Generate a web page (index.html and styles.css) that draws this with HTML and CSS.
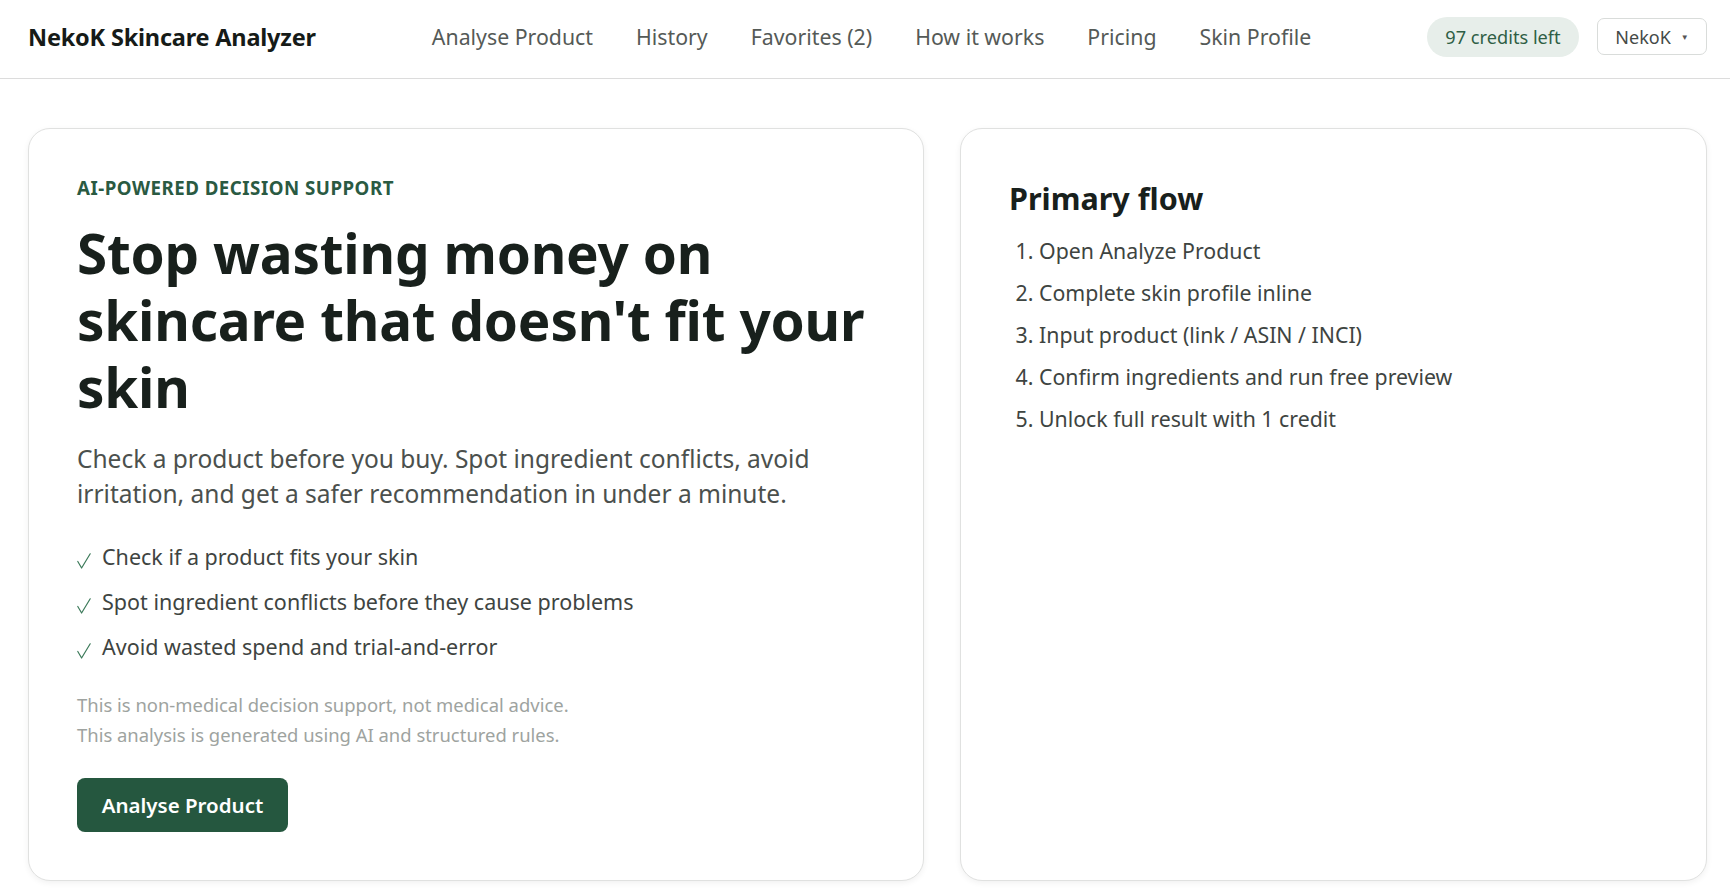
FILE: index.html
```html
<!DOCTYPE html>
<html lang="en">
<head>
<meta charset="utf-8">
<title>NekoK Skincare Analyzer</title>
<link rel="stylesheet" href="styles.css">
</head>
<body>
<header class="topbar">
  <div class="brand">NekoK Skincare Analyzer</div>
  <nav class="nav">
    <a href="#">Analyse Product</a>
    <a href="#">History</a>
    <a href="#">Favorites (2)</a>
    <a href="#">How it works</a>
    <a href="#">Pricing</a>
    <a href="#">Skin Profile</a>
  </nav>
  <div class="account">
    <span class="credits">97 credits left</span>
    <button class="user">NekoK <span class="caret">▼</span></button>
  </div>
</header>
<main class="main">
  <section class="card hero">
    <div class="eyebrow">AI-POWERED DECISION SUPPORT</div>
    <h1 class="headline">Stop wasting money on skincare that doesn't fit your skin</h1>
    <p class="lead">Check a product before you buy. Spot ingredient conflicts, avoid irritation, and get a safer recommendation in under a minute.</p>
    <ul class="checks">
      <li><svg class="tick" viewBox="0 0 14 16" width="14" height="16"><polyline points="0.8,8.5 4.6,15 13.2,0.8" fill="none" stroke="#3c7a5a" stroke-width="1.2" stroke-linejoin="round" stroke-linecap="round"/></svg>Check if a product fits your skin</li>
      <li><svg class="tick" viewBox="0 0 14 16" width="14" height="16"><polyline points="0.8,8.5 4.6,15 13.2,0.8" fill="none" stroke="#3c7a5a" stroke-width="1.2" stroke-linejoin="round" stroke-linecap="round"/></svg>Spot ingredient conflicts before they cause problems</li>
      <li><svg class="tick" viewBox="0 0 14 16" width="14" height="16"><polyline points="0.8,8.5 4.6,15 13.2,0.8" fill="none" stroke="#3c7a5a" stroke-width="1.2" stroke-linejoin="round" stroke-linecap="round"/></svg>Avoid wasted spend and trial-and-error</li>
    </ul>
    <div class="disclaimer">
      <p>This is non-medical decision support, not medical advice.</p>
      <p>This analysis is generated using AI and structured rules.</p>
    </div>
    <button class="cta">Analyse Product</button>
  </section>
  <section class="card flow">
    <h2 class="flow-title">Primary flow</h2>
    <ol class="steps">
      <li>Open Analyze Product</li>
      <li>Complete skin profile inline</li>
      <li>Input product (link / ASIN / INCI)</li>
      <li>Confirm ingredients and run free preview</li>
      <li>Unlock full result with 1 credit</li>
    </ol>
  </section>
</main>
</body>
</html>
```

FILE: styles.css
```css
* { box-sizing: border-box; }
html, body { margin: 0; padding: 0; background: #ffffff; }
body {
  font-family: "Noto Sans", "Open Sans", sans-serif;
  color: #1d2420;
}
.topbar {
  display: flex;
  align-items: center;
  height: 79px;
  padding: 0 23px 0 28px;
  border-bottom: 1px solid #dcdcdc;
}
.brand {
  font-size: 23.5px;
  font-weight: 700;
  color: #161b18;
  letter-spacing: -0.2px;
  margin-top: -5px;
}
.nav {
  display: flex;
  gap: 43px;
  margin-left: 116px;
  margin-top: -5px;
}
.nav a {
  color: #555a57;
  text-decoration: none;
  font-size: 21.3px;
}
.account {
  margin-left: auto;
  display: flex;
  align-items: center;
  gap: 18px;
  margin-top: -5px;
}
.credits {
  display: inline-flex;
  align-items: center;
  justify-content: center;
  height: 40px;
  width: 152px;
  border-radius: 20px;
  background: #e7eeea;
  color: #2f5e45;
  font-size: 18.2px;
}
.user {
  height: 37px;
  width: 110px;
  border: 1px solid #d9dcda;
  border-radius: 7px;
  background: #fff;
  color: #454a47;
  font-family: inherit;
  font-size: 18px;
  display: inline-flex;
  align-items: center;
  justify-content: center;
  gap: 10px;
  padding: 0;
}
.caret { font-size: 8px; color: #555; }
.main {
  display: grid;
  grid-template-columns: 896px 1fr;
  gap: 36px;
  padding: 49px 23px 40px 28px;
  align-items: stretch;
}
.card {
  background: #fff;
  border: 1px solid #e0e1e0;
  border-radius: 22px;
  box-shadow: 0 2px 6px rgba(0, 0, 0, 0.06);
  padding: 48px;
}
.eyebrow {
  font-size: 18.7px;
  font-weight: 700;
  color: #2a5a42;
  letter-spacing: 0.5px;
  line-height: 20px;
  margin-top: 1px;
}
.headline {
  margin: 21px 0 0;
  font-size: 54.8px;
  line-height: 67px;
  font-weight: 700;
  color: #18201c;
  letter-spacing: -0.2px;
}
.lead {
  margin: 21px 0 0;
  font-size: 24.5px;
  line-height: 35px;
  color: #4b504d;
}
.checks {
  list-style: none;
  padding: 0;
  margin: 23px 0 0;
}
.checks li {
  display: flex;
  align-items: center;
  gap: 11px;
  font-size: 21.5px;
  line-height: 45px;
  color: #3e4441;
}
.tick { flex: none; margin-top: 8px; }
.disclaimer {
  margin-top: 21px;
  color: #9ea3a0;
  font-size: 18.45px;
  line-height: 30px;
}
.disclaimer p { margin: 0; }
.cta {
  display: block;
  margin-top: 28px;
  height: 54px;
  width: 211px;
  border: none;
  border-radius: 8px;
  background: #25573f;
  color: #ffffff;
  font-family: inherit;
  font-size: 20.5px;
  font-weight: 600;
  padding: 0;
}
.flow-title {
  margin: 0;
  font-size: 30.5px;
  line-height: 42px;
  font-weight: 700;
  color: #18201c;
}
.steps {
  margin: 11px 0 0;
  padding-left: 30px;
  color: #3e4441;
  font-size: 21.3px;
  line-height: 42px;
}
```
